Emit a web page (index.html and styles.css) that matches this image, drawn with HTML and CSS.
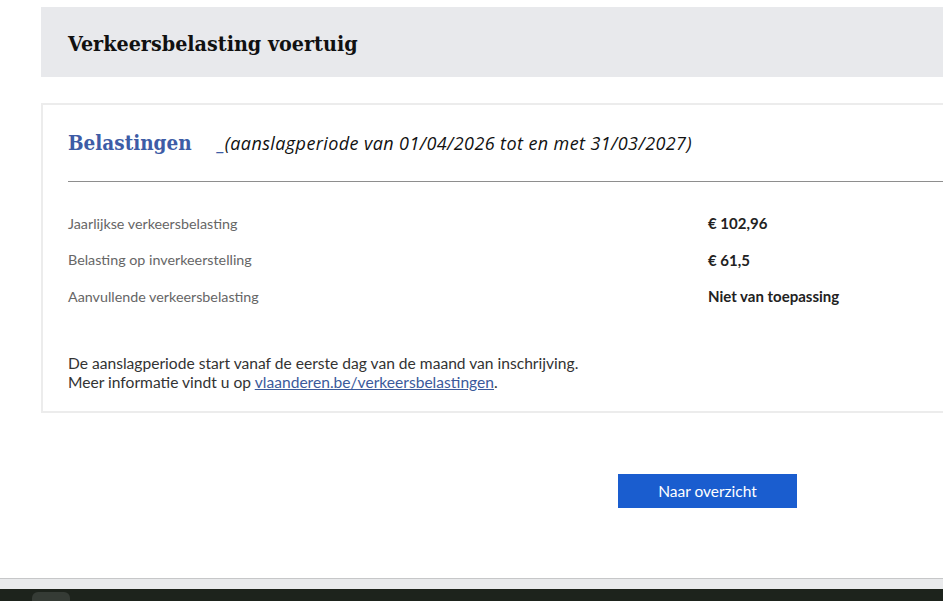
FILE: index.html
```html
<!DOCTYPE html>
<html lang="nl">
<head>
<meta charset="utf-8">
<title>Verkeersbelasting voertuig</title>
<link rel="stylesheet" href="styles.css">
</head>
<body>
<div class="page">
  <header class="header">
    <h1 class="header-title">Verkeersbelasting voertuig</h1>
  </header>

  <section class="card">
    <div class="card-head">
      <h2 class="card-title">Belastingen</h2>
      <span class="period"><span class="period-mark">_</span>(aanslagperiode van 01/04/2026 tot en met 31/03/2027)</span>
    </div>
    <hr class="divider">
    <dl class="rows">
      <div class="row"><dt class="label">Jaarlijkse verkeersbelasting</dt><dd class="value">€ 102,96</dd></div>
      <div class="row"><dt class="label">Belasting op inverkeerstelling</dt><dd class="value">€ 61,5</dd></div>
      <div class="row"><dt class="label">Aanvullende verkeersbelasting</dt><dd class="value">Niet van toepassing</dd></div>
    </dl>
    <p class="note">De aanslagperiode start vanaf de eerste dag van de maand van inschrijving.<br>Meer informatie vindt u op <a class="link" href="#">vlaanderen.be/verkeersbelastingen</a>.</p>
  </section>

  <div class="actions">
    <button class="button" type="button">Naar overzicht</button>
  </div>
</div>
<footer class="footer">
  <div class="footer-band"></div>
  <div class="footer-dark"><span class="footer-knob"></span></div>
</footer>
</body>
</html>
```

FILE: styles.css
```css
* { box-sizing: border-box; }
html, body { margin: 0; padding: 0; background: #fff; }
body { font-family: Lato, "Open Sans", sans-serif; color: #222; overflow: hidden; }

.page {
  height: 578px;
  padding: 7px 0 0 41px;
}

.header {
  background: #e8e9ec;
  height: 70px;
  display: flex;
  align-items: center;
  padding-left: 27px;
}
.header-title {
  margin: 0;
  font-family: "DejaVu Serif", serif;
  font-stretch: condensed;
  font-weight: bold;
  font-size: 21.3px;
  color: #111;
  padding-top: 2px;
}

.card {
  margin-top: 26px;
  border: 2px solid #ececec;
  border-right: 0;
  padding: 23px 0 19px 25px;
}
.card-head {
  display: flex;
  align-items: baseline;
  height: 30px;
}
.card-title {
  margin: 0;
  font-family: "DejaVu Serif", serif;
  font-stretch: condensed;
  font-weight: bold;
  font-size: 20.5px;
  line-height: 30px;
  color: #3d5ca6;
}
.period {
  margin-left: 26px;
  font-family: "Open Sans", sans-serif;
  font-style: italic;
  font-size: 18px;
  letter-spacing: 0.4px;
  color: #111;
}
.period-mark { color: #3d5ca6; margin-right: 0; letter-spacing: 0; }

.divider {
  margin: 23px 0 0 0;
  border: 0;
  border-top: 1px solid #8e8e8e;
  height: 0;
}

.rows { margin: 23px 0 0 0; padding: 0; }
.row {
  display: grid;
  grid-template-columns: 640px 1fr;
  height: 36.5px;
  align-items: center;
}
.label { margin: 0; font-size: 14.3px; color: #666; }
.value { margin: 0; font-size: 15px; font-weight: bold; color: #222; }

.note {
  margin: 39px 0 0 0;
  font-size: 15.6px;
  line-height: 19px;
  color: #333;
}
.link { color: #3b5a9b; text-decoration: underline; }

.actions {
  margin-top: 61px;
  padding-left: 577px;
}
.button {
  width: 179px;
  height: 34px;
  border: 0;
  background: #1a5dcf;
  color: #fff;
  font-family: Lato, "Open Sans", sans-serif;
  font-size: 15.5px;
  padding: 0;
}

.footer { height: 23px; }
.footer-band {
  height: 11px;
  border-top: 1px solid #c6c7c8;
  background: #e9eaec;
}
.footer-dark {
  height: 12px;
  background: #1d231c;
  padding-left: 32px;
  padding-top: 3px;
}
.footer-knob {
  display: block;
  width: 38px;
  height: 12px;
  background: #353b35;
  border-radius: 6px 6px 0 0;
}
```
